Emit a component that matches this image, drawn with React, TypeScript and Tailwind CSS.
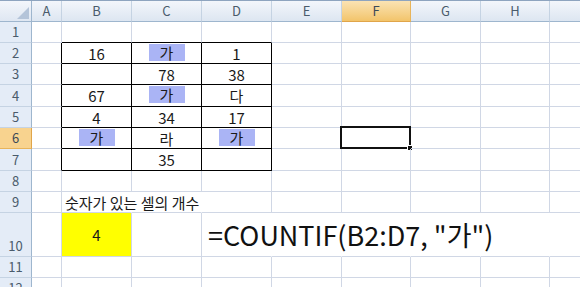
import * as React from "react";

type Cell = { text?: string; hl?: boolean; yellow?: boolean; left?: boolean; formula?: boolean };

const COLS = [
  { key: "A", w: "w-[30px]" },
  { key: "B", w: "w-[70px]" },
  { key: "C", w: "w-[70px]" },
  { key: "D", w: "w-[70px]" },
  { key: "E", w: "w-[70px]" },
  { key: "F", w: "w-[69px]" },
  { key: "G", w: "w-[70px]" },
  { key: "H", w: "w-[69px]" },
  { key: "I", w: "w-[40px]" },
];

const ROWS: { n: number; h: string; cells: Record<string, Cell> }[] = [
  { n: 1, h: "h-[21px]", cells: {} },
  { n: 2, h: "h-[21px]", cells: { B: { text: "16" }, C: { text: "가", hl: true }, D: { text: "1" } } },
  { n: 3, h: "h-[21px]", cells: { C: { text: "78" }, D: { text: "38" } } },
  { n: 4, h: "h-[22px]", cells: { B: { text: "67" }, C: { text: "가", hl: true }, D: { text: "다" } } },
  { n: 5, h: "h-[21px]", cells: { B: { text: "4" }, C: { text: "34" }, D: { text: "17" } } },
  { n: 6, h: "h-[21px]", cells: { B: { text: "가", hl: true }, C: { text: "라" }, D: { text: "가", hl: true } } },
  { n: 7, h: "h-[22px]", cells: { C: { text: "35" } } },
  { n: 8, h: "h-[21px]", cells: {} },
  { n: 9, h: "h-[21px]", cells: { B: { text: "숫자가 있는 셀의 개수", left: true } } },
  { n: 10, h: "h-[44px]", cells: { B: { text: "4", yellow: true }, D: { text: "=COUNTIF(B2:D7, \"가\")", formula: true } } },
  { n: 11, h: "h-[21px]", cells: {} },
  { n: 12, h: "h-[21px]", cells: {} },
];

const font = "font-['Malgun_Gothic','Noto_Sans_CJK_KR',sans-serif]";

function rightClass(r: number, c: string) {
  if (r >= 2 && r <= 7 && "ABCD".includes(c)) return "border-r-black";
  if (r === 9 && (c === "B" || c === "C")) return "border-r-transparent";
  if (r === 10 && "DEFGH".includes(c)) return "border-r-transparent";
  return "border-r-[#d0d7e5]";
}

function bottomClass(r: number, c: string) {
  if (r >= 1 && r <= 7 && "BCD".includes(c)) return "border-b-black";
  return "border-b-[#d0d7e5]";
}

export default function App() {
  return (
    <div className={`w-[580px] h-[287px] overflow-hidden bg-white text-[#1a1a1a] ${font}`}>
      {/* column headers */}
      <div className="flex h-[22px] border-t border-t-[#8ea4bf]">
        <div className="relative w-[32px] shrink-0 border-r border-b border-r-[#9eb6ce] border-b-[#9eb6ce] bg-gradient-to-b from-[#f3f6fb] to-[#dfe7f2]">
          <svg className="absolute right-[2px] bottom-[2px]" width="12" height="12" viewBox="0 0 12 12">
            <polygon points="12,0 12,12 0,12" fill="#b4c4d9" />
          </svg>
        </div>
        {COLS.map((c) => (
          <div
            key={c.key}
            className={`${c.w} shrink-0 flex items-center justify-center border-r border-b text-[13px] ${
              c.key === "F"
                ? "bg-gradient-to-b from-[#fbe3b3] to-[#f2c46a] border-r-[#e8b45a] border-b-[#e0a54a] text-[#3c4a58]"
                : "bg-gradient-to-b from-[#f3f6fb] to-[#dde6f1] border-r-[#c5d3e3] border-b-[#9eb6ce] text-[#4a5b6b]"
            }`}
          >
            {c.key === "I" ? "" : c.key}
          </div>
        ))}
      </div>

      {ROWS.map((row) => (
        <div key={row.n} className={`flex ${row.h}`}>
          <div
            className={`w-[32px] shrink-0 flex items-end justify-center pb-[1px] border-r border-b text-[13px] leading-[18px] ${
              row.n === 6
                ? "bg-[#f8d38f] border-r-[#e0a54a] border-b-[#e8b45a] text-[#3c4a58]"
                : "bg-[#e4ecf7] border-r-[#9eb6ce] border-b-[#c5d3e3] text-[#4a5b6b]"
            }`}
          >
            {row.n}
          </div>
          {COLS.map((c) => {
            const cell = row.cells[c.key];
            const selected = row.n === 6 && c.key === "F";
            return (
              <div
                key={c.key}
                className={`${c.w} shrink-0 relative flex items-center border-r border-b ${rightClass(row.n, c.key)} ${bottomClass(
                  row.n,
                  c.key
                )} ${cell?.yellow ? "bg-[#ffff00]" : ""} ${cell?.left || cell?.formula ? "justify-start" : "justify-center"}`}
              >
                {cell?.text &&
                  (cell.hl ? (
                    <span className="w-[36px] h-[17px] bg-[#aab4f5] text-center text-[15px] leading-[17px] mt-[-2px]">
                      {cell.text}
                    </span>
                  ) : cell.formula ? (
                    <span className="absolute left-[6px] top-[5px] whitespace-nowrap text-[27px] leading-[33px] text-[#111]">
                      {cell.text}
                    </span>
                  ) : cell.left ? (
                    <span className="absolute left-[3px] top-[1px] whitespace-nowrap text-[15px] leading-[19px]">
                      {cell.text}
                    </span>
                  ) : (
                    <span className="text-[15px] leading-[19px]">{cell.text}</span>
                  ))}
                {selected && (
                  <div className="absolute left-[-2px] top-[-2px] right-[-1px] bottom-[-1px] border-[2px] border-[#111]">
                    <div className="absolute right-[-4px] bottom-[-4px] w-[6px] h-[6px] bg-[#111] border border-white" />
                  </div>
                )}
              </div>
            );
          })}
        </div>
      ))}
    </div>
  );
}
